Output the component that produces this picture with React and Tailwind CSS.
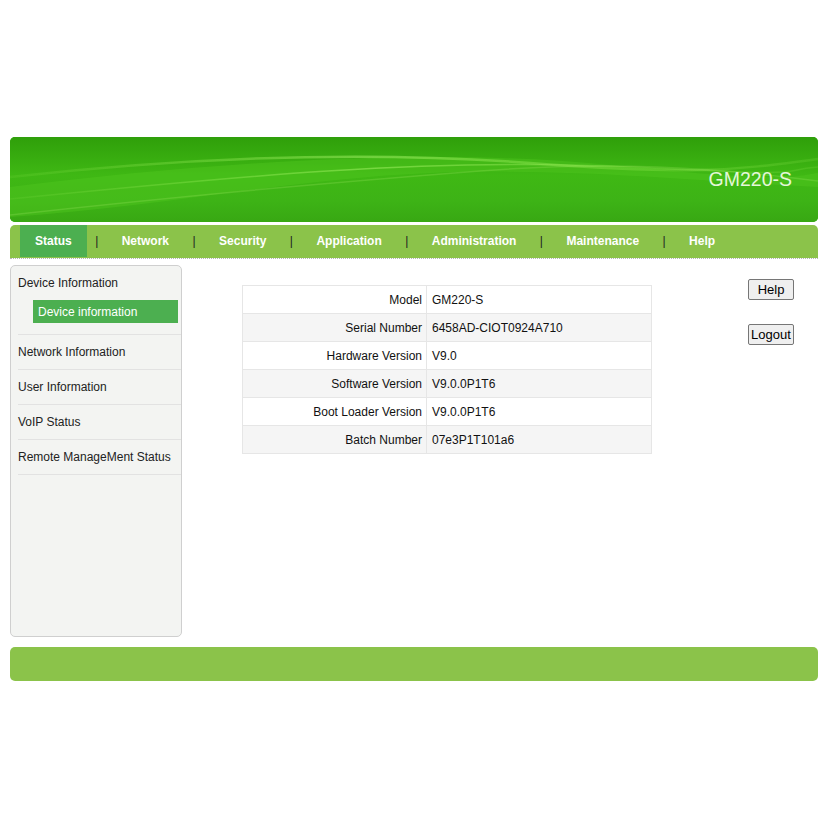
import React from 'react';

const NAV = ['Status', 'Network', 'Security', 'Application', 'Administration', 'Maintenance', 'Help'];

const MENU = ['Network Information', 'User Information', 'VoIP Status', 'Remote ManageMent Status'];

const INFO = [
  ['Model', 'GM220-S'],
  ['Serial Number', '6458AD-CIOT0924A710'],
  ['Hardware Version', 'V9.0'],
  ['Software Version', 'V9.0.0P1T6'],
  ['Boot Loader Version', 'V9.0.0P1T6'],
  ['Batch Number', '07e3P1T101a6'],
];

// green banner with the light swoosh across it
function Banner() {
  return (
    <div className="relative h-[85px] overflow-hidden rounded-[5px] bg-[#36a80e]">
      <svg className="absolute inset-0 h-full w-full" viewBox="0 0 808 85" preserveAspectRatio="none">
        <defs>
          <linearGradient id="bg" x1="0" y1="0" x2="0" y2="1">
            <stop offset="0" stopColor="#2f9f0a" />
            <stop offset="0.45" stopColor="#3fb814" />
            <stop offset="0.75" stopColor="#3db316" />
            <stop offset="1" stopColor="#38a813" />
          </linearGradient>
          <linearGradient id="glow" x1="0" y1="0" x2="1" y2="0">
            <stop offset="0" stopColor="#9ef05a" stopOpacity="0.1" />
            <stop offset="0.45" stopColor="#a8f56a" stopOpacity="0.5" />
            <stop offset="0.75" stopColor="#9ef05a" stopOpacity="0.3" />
            <stop offset="1" stopColor="#9ef05a" stopOpacity="0.15" />
          </linearGradient>
        </defs>
        <rect width="808" height="85" fill="url(#bg)" />
        <path d="M0 50 C 200 25, 420 10, 600 28 S 780 40, 808 36 L 808 50 C 700 45, 560 30, 420 36 S 150 70, 0 80 Z" fill="#52c820" opacity="0.4" />
        <path d="M0 40 C 180 20, 360 14, 520 26 S 720 34, 808 22" stroke="url(#glow)" strokeWidth="2.5" fill="none" />
        <path d="M0 62 C 220 40, 420 20, 620 30 S 760 34, 808 30" stroke="url(#glow)" strokeWidth="1.5" fill="none" />
        <path d="M0 78 C 160 60, 340 44, 470 34 S 700 30, 808 44" stroke="#b8f57a" strokeOpacity="0.2" strokeWidth="1.5" fill="none" />
      </svg>
      <div className="relative flex h-full items-center justify-end pr-[26px]">
        <span className="text-[19.5px] text-[#e4f7d8]">GM220-S</span>
      </div>
    </div>
  );
}

function NavBar() {
  return (
    <div className="mt-[3px] border-b border-dotted border-[#b5b5b5]">
      <div className="flex h-[33px] items-stretch rounded-t-[5px] bg-[#8bc34a] pl-[10px] pb-px text-[12px] font-bold text-white">
        {NAV.map((n, i) => (
          <React.Fragment key={n}>
            {i > 0 && <span className="flex w-[20px] items-center justify-center font-normal text-[#222]">|</span>}
            <span className={`flex items-center px-[15px] ${i === 0 ? 'bg-[#4caf50]' : ''}`}>{n}</span>
          </React.Fragment>
        ))}
      </div>
    </div>
  );
}

function Sidebar() {
  return (
    <div className="h-[372px] w-[172px] shrink-0 rounded-[5px] border border-[#cfcfcf] bg-[#f3f4f2] text-[12px] text-[#222]">
      <div className="ml-[7px]">
        <div className="border-b border-[#e2e2e2] pt-[9px] pb-[11px]">
          <div className="leading-[17px]">Device Information</div>
          <div className="mt-[8px] mr-[3px] ml-[15px] flex h-[23px] items-center bg-[#4caf50] pl-[5px] text-white">Device information</div>
        </div>
        {MENU.map((m) => (
          <div key={m} className="flex h-[35px] items-center border-b border-[#e2e2e2]">{m}</div>
        ))}
      </div>
    </div>
  );
}

function InfoTable() {
  return (
    <table className="w-[410px] border-collapse border border-[#e6e6e6] text-[12px] text-[#111]">
      <tbody>
        {INFO.map(([k, v], i) => (
          <tr key={k} className={`h-[28px] ${i % 2 ? 'bg-[#f5f5f5]' : 'bg-white'}`}>
            <td className="w-[184px] border border-[#e6e6e6] pr-[4px] text-right">{k}</td>
            <td className="border border-[#e6e6e6] pl-[5px]">{v}</td>
          </tr>
        ))}
      </tbody>
    </table>
  );
}

function Btn({ children }) {
  return (
    <button className="h-[21px] w-[46px] rounded-[2px] border border-[#767676] bg-[#efefef] text-[13px] text-black">
      {children}
    </button>
  );
}

export default function App() {
  return (
    <div className="min-h-[824px] w-[824px] bg-white pt-[137px] pr-[6px] pl-[10px] font-['Liberation_Sans',Arial,sans-serif]">
      <Banner />
      <NavBar />
      <div className="mt-[6px] flex">
        <Sidebar />
        <div className="flex-1 pt-5 pl-[60px]">
          <InfoTable />
        </div>
        <div className="mr-[24px] flex flex-col gap-[24px] pt-[14px]">
          <Btn>Help</Btn>
          <Btn>Logout</Btn>
        </div>
      </div>
      <div className="mt-[10px] h-[34px] rounded-[5px] bg-[#8bc34a]" />
    </div>
  );
}
